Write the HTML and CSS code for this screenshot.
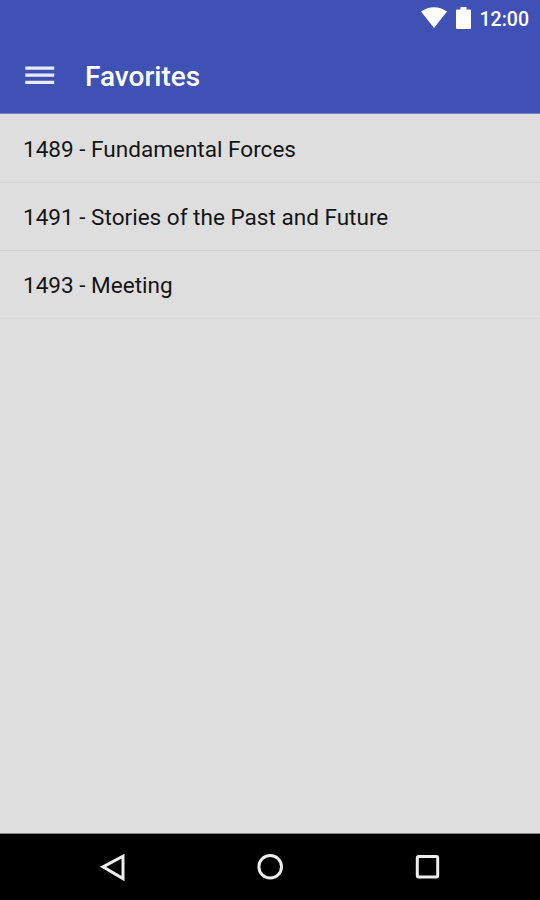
FILE: index.html
```
<!DOCTYPE html>
<html lang="en">
<head>
<meta charset="utf-8">
<title>Favorites</title>
<link rel="stylesheet" href="styles.css">
</head>
<body>
<div class="screen">
  <header class="header">
    <div class="status-bar">
      <svg class="wifi" width="26" height="21" viewBox="0 0 26 21"><path d="M0 4.5Q6 .2 13 .2T26 4.5L13 21Z" fill="#fff"/></svg>
      <svg class="battery" width="15" height="22" viewBox="0 0 15 22"><path d="M4.5 0h6v2.5H14Q15 2.5 15 3.5V21Q15 22 14 22H1Q0 22 0 21V3.5Q0 2.5 1 2.5H4.5Z" fill="#fff"/></svg>
      <span class="clock">12:00</span>
    </div>
    <div class="toolbar">
      <svg class="menu" width="30" height="20" viewBox="0 0 30 20"><path d="M.3 2.2h28.9M.3 9.2h28.9M.3 16.4h28.9" stroke="#e8ebf8" stroke-width="3.2"/></svg>
      <h1 class="title">Favorites</h1>
    </div>
  </header>
  <main class="content">
    <ul class="list">
      <li class="row"><span class="label">1489 - Fundamental Forces</span></li>
      <li class="row"><span class="label">1491 - Stories of the Past and Future</span></li>
      <li class="row"><span class="label">1493 - Meeting</span></li>
    </ul>
  </main>
  <nav class="nav-bar">
    <svg width="32" height="32" viewBox="0 0 32 32"><path d="M26 5.2v22.4L6 15.9Z"/></svg>
    <svg width="32" height="32" viewBox="0 0 32 32"><circle cx="16.2" cy="15.8" r="11.3"/></svg>
    <svg width="32" height="32" viewBox="0 0 32 32"><rect x="6.3" y="5.6" width="20.4" height="20.4" rx="1.5"/></svg>
  </nav>
</div>
</body>
</html>
```
FILE: styles.css
```
* {
  box-sizing: border-box;
}

body {
  margin: 0;
  font-family: Roboto, "Liberation Sans", sans-serif;
}

.screen {
  display: flex;
  flex-direction: column;
  width: 540px;
  height: 900px;
  background: #dedede;
}

.header {
  height: 114px;
  background: #3f51b5;
  border-bottom: 1px solid #7983b8;
  color: #fff;
}

.status-bar {
  display: flex;
  justify-content: flex-end;
  align-items: flex-start;
  height: 38px;
  padding: 7px 11px 0 0;
}

.wifi {
  margin-right: 8.5px;
}

.battery {
  margin-right: 9px;
}

.clock {
  margin-top: 1px;
  font-size: 19.5px;
  font-weight: 500;
  line-height: 24px;
}

.toolbar {
  display: flex;
  align-items: center;
  height: 75px;
  padding-left: 25px;
}

.title {
  margin: 2px 0 0 30px;
  font-size: 28px;
  font-weight: 500;
  line-height: 32px;
}

.content {
  flex: 1;
}

.list {
  margin: 0;
  padding: 0;
  list-style: none;
}

.row {
  display: flex;
  align-items: center;
  height: 68px;
  padding: 3px 23px 0;
  border-bottom: 1px solid #d0d0d0;
}

.row:first-child {
  height: 69px;
}

.row:last-child {
  border-bottom-color: #d9d9d9;
}

.label {
  color: #151515;
  font-size: 22.55px;
  line-height: 28px;
}

.nav-bar {
  display: flex;
  justify-content: space-between;
  align-items: center;
  height: 67px;
  padding: 0 97px;
  border-top: 1px solid #888;
  background: #000;
}

.nav-bar svg {
  fill: none;
  stroke: #eee;
  stroke-width: 3;
}
```
